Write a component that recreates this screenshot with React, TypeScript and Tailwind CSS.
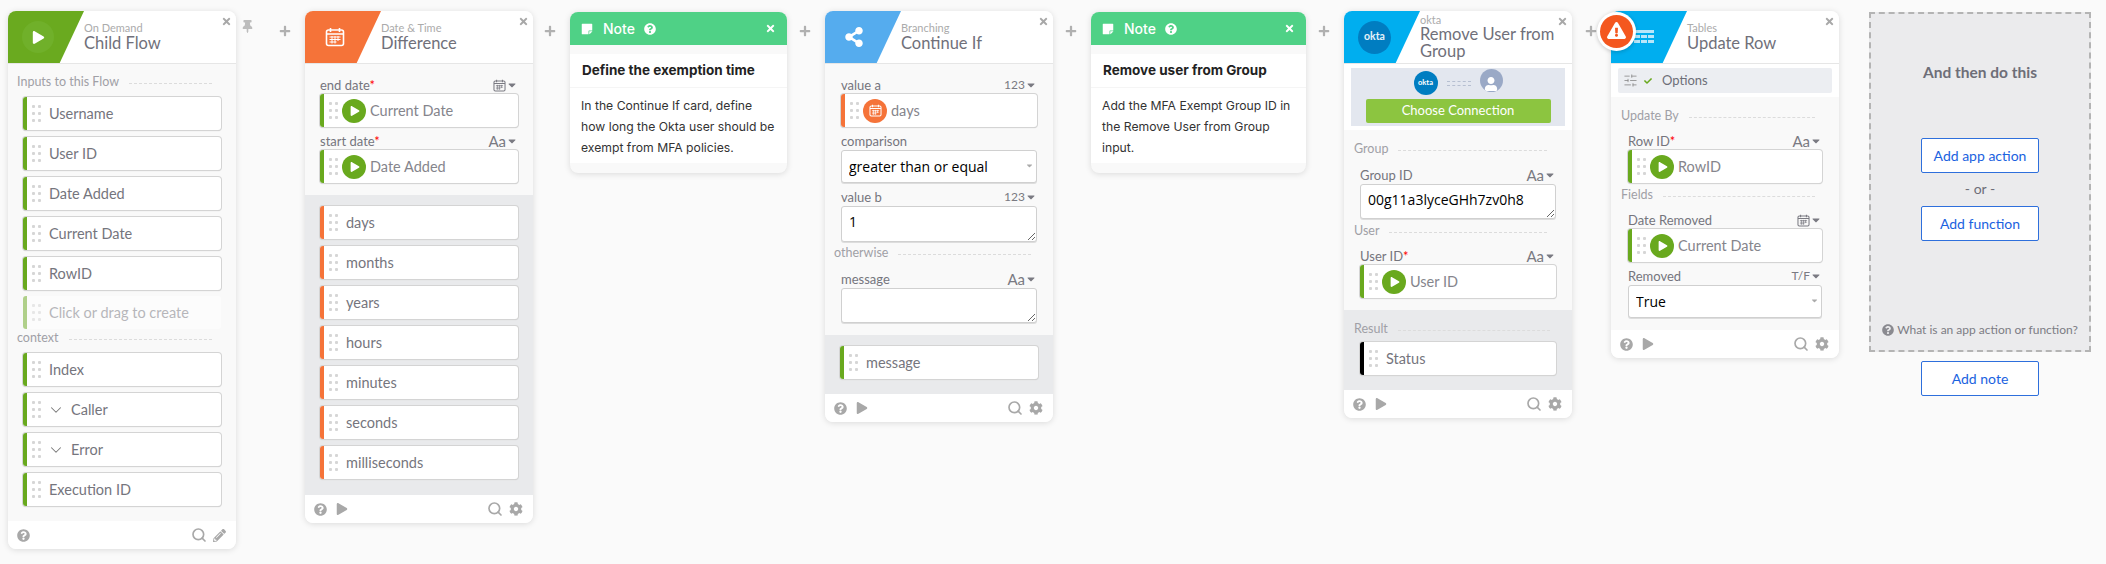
import type { ReactNode } from "react";
import { ChevronDown, Search, SlidersHorizontal } from "lucide-react";
import {
  FaCaretDown,
  FaCheck,
  FaCog,
  FaExclamationTriangle,
  FaPencilAlt,
  FaPlay,
  FaPlus,
  FaQuestionCircle,
  FaShareAlt,
  FaStickyNote,
  FaThumbtack,
  FaTimes,
  FaUser,
} from "react-icons/fa";

// accent colours of the pills
const GREEN = "bg-[#69a91e]";
const ORANGE = "bg-[#f57339]";

function DragDots() {
  return (
    <svg width="9" height="17" viewBox="0 0 9 17" className="shrink-0 fill-[#d6d6d6]">
      <rect x="0" y="0" width="3" height="3" rx="1" />
      <rect x="6" y="0" width="3" height="3" rx="1" />
      <rect x="0" y="7" width="3" height="3" rx="1" />
      <rect x="6" y="7" width="3" height="3" rx="1" />
      <rect x="0" y="14" width="3" height="3" rx="1" />
      <rect x="6" y="14" width="3" height="3" rx="1" />
    </svg>
  );
}

function CalendarGlyph({ size = 14, className = "" }: { size?: number; className?: string }) {
  return (
    <svg width={size} height={size} viewBox="0 0 20 20" className={className} fill="none" stroke="currentColor">
      <rect x="1.5" y="3" width="17" height="15.5" rx="2" strokeWidth="1.6" />
      <path d="M5.5 1v4M14.5 1v4M1.5 7h17" strokeWidth="1.6" />
      <path d="M4.5 10h11M4.5 12.5h11M4.5 15h7M7 9v7.5M10 9v7.5M13 9v5" strokeWidth="1" />
    </svg>
  );
}

function PlayBadge() {
  return (
    <span className="ml-[2px] flex h-[24px] w-[24px] shrink-0 items-center justify-center rounded-full bg-[#69a91e]">
      <FaPlay size={10} className="ml-[2px] text-white" />
    </span>
  );
}

function Pill({
  label,
  accent = GREEN,
  badge,
  faded,
  chevron,
}: {
  label: string;
  accent?: string;
  badge?: ReactNode;
  faded?: boolean;
  chevron?: boolean;
}) {
  return (
    <div
      className={
        "flex h-[33px] items-center overflow-hidden rounded-[3px] bg-white shadow-[0_0_0_1px_#d4d4d4,0_1px_1px_#c8c8c8] " +
        (faded ? "opacity-50 shadow-none" : "")
      }
    >
      <span className={"h-full w-[4px] shrink-0 " + accent} />
      <span className="ml-[5px] flex">
        <DragDots />
      </span>
      {chevron && <ChevronDown size={18} strokeWidth={1.4} className="ml-[6px] text-[#777]" />}
      {badge ? (
        <span className="ml-[2px] flex items-center gap-[4px]">
          {badge}
          <span className="text-[14.5px] text-[#85858c]">{label}</span>
        </span>
      ) : (
        <span className={"text-[14.5px] text-[#75757d] " + (chevron ? "ml-[6px]" : "ml-[8px]")}>{label}</span>
      )}
    </div>
  );
}

function TypeTag({ type }: { type: string }) {
  return (
    <span className="flex items-center text-[#7a7a82]">
      {type === "date" ? (
        <CalendarGlyph size={13} />
      ) : (
        <span className={type === "Aa" ? "text-[15px]" : "text-[12px]"}>{type}</span>
      )}
      <FaCaretDown size={12} className="-mr-[2px]" />
    </span>
  );
}

function FieldLabel({ name, required, type }: { name: string; required?: boolean; type?: string }) {
  return (
    <div className="mb-[1px] flex h-4 items-center justify-between pr-[2px] text-[13px] leading-4 text-[#75757d]">
      <span>
        {name}
        {required && <span className="text-[#f00]">*</span>}
      </span>
      {type && <TypeTag type={type} />}
    </div>
  );
}

function TextBox({ value, height }: { value: string; height: string }) {
  return (
    <textarea
      readOnly
      defaultValue={value}
      className={
        "block w-full resize overflow-hidden rounded-[3px] border border-[#d0d0d0] bg-white px-[7px] py-[5px] font-['Open_Sans',sans-serif] text-[14px] leading-[20px] text-black outline-none shadow-[0_1px_0_#ddd] " +
        height
      }
    />
  );
}

function SelectBox({ value }: { value: string }) {
  return (
    <div className="relative">
      <select
        defaultValue={value}
        className="block h-[33px] w-full appearance-none rounded-[3px] border border-[#d0d0d0] bg-white px-[7px] font-['Open_Sans',sans-serif] text-[14px] text-black outline-none shadow-[0_1px_0_#ddd]"
      >
        <option>{value}</option>
      </select>
      <FaCaretDown size={9} className="absolute right-[3px] top-[11px] text-[#aaa]" />
    </div>
  );
}

function Section({ label, className = "" }: { label: string; className?: string }) {
  return (
    <div className={"flex h-4 items-center gap-[10px] text-[12.5px] leading-4 text-[#a0a0a6] " + className}>
      <span>{label}</span>
      <span className="mt-[3px] flex-1 border-t border-dashed border-[#dcdcdc]" />
    </div>
  );
}

function Footer({ run = true, edit }: { run?: boolean; edit?: boolean }) {
  return (
    <div className="flex h-[28px] items-center justify-between rounded-b-lg bg-white pl-[9px] pr-[10px] text-[#a8a8a8]">
      <span className="flex items-center gap-[9px]">
        <FaQuestionCircle size={13} />
        {run && <FaPlay size={12} />}
      </span>
      <span className="flex items-center gap-[6px]">
        <Search size={16} strokeWidth={2.5} />
        {edit ? <FaPencilAlt size={13} /> : <FaCog size={14} />}
      </span>
    </div>
  );
}

function Card({
  category,
  title,
  color,
  icon,
  children,
  compactTitle,
}: {
  category: string;
  title: string;
  color: string;
  icon: ReactNode;
  children: ReactNode;
  compactTitle?: boolean;
}) {
  return (
    <div className="relative w-[228px] shrink-0 rounded-lg bg-[#f9f9f9] shadow-[0_1px_6px_rgba(0,0,0,0.13)]">
      <div className="relative flex h-[53px] rounded-t-lg border-b border-[#e6e6e6] bg-white">
        <div
          className={
            "flex h-[52px] w-[76px] shrink-0 items-center rounded-tl-lg pl-[14px] [clip-path:polygon(0_0,100%_0,68%_100%,0_100%)] " +
            color
          }
        >
          {icon}
        </div>
        <div className={compactTitle ? "pt-[3px]" : "pt-[11px]"}>
          <div className="text-[11px] leading-[12px] text-[#ababab]">{category}</div>
          <div className={"w-[136px] text-[16.5px] text-[#70707a] " + (compactTitle ? "leading-[17px]" : "leading-[18px]")}>
            {title}
          </div>
        </div>
        <FaTimes size={11} className="absolute right-[4px] top-[5px] text-[#a8a8a8]" />
      </div>
      {children}
    </div>
  );
}

function Gap({ width, pin }: { width: string; pin?: boolean }) {
  return (
    <div className={"flex shrink-0 justify-end pt-[14px] " + width}>
      {pin && <FaThumbtack size={13} className="-mt-[5px] mr-[25px] text-[#bdbdbd]" />}
      <FaPlus size={12} className="mr-[14px] text-[#b0b0b0]" />
    </div>
  );
}

function Note({ title, lines, width }: { title: string; lines: string[]; width: string }) {
  return (
    <div
      className={
        "relative mt-[1px] shrink-0 overflow-hidden rounded-lg bg-[#f9f9f9] font-[Inter,sans-serif] shadow-[0_1px_6px_rgba(0,0,0,0.13)] " +
        width
      }
    >
      <div className="flex h-[33px] items-center bg-[#4fd186] pl-[11px] text-white">
        <FaStickyNote size={12} />
        <span className="ml-[10px] text-[14px] font-medium">Note</span>
        <FaQuestionCircle size={12} className="ml-[9px]" />
        <FaTimes size={11} className="absolute right-[11px] top-[11px]" />
      </div>
      <div className="mt-[9px] bg-white pb-[5px]">
        <div className="flex h-[34px] items-center border-b border-[#f5f5f5] pl-[12px] text-[13.5px] font-bold text-[#222]">
          {title}
        </div>
        <div className="pl-[11px] pt-[7px] text-[12.2px] leading-[21px] text-[#333]">
          {lines.map((l) => (
            <div key={l}>{l}</div>
          ))}
        </div>
      </div>
      <div className="h-[10px]" />
    </div>
  );
}

const OUTPUTS = ["days", "months", "years", "hours", "minutes", "seconds", "milliseconds"];

export default function App() {
  return (
    <div className="flex h-[564px] items-start overflow-hidden bg-[#fafafa] pl-[8px] pt-[11px] font-[Lato,sans-serif]">
      {/* Flow trigger */}
      <Card
        category="On Demand"
        title="Child Flow"
        color="bg-[#6aaa1f]"
        icon={
          <span className="flex h-[32px] w-[32px] items-center justify-center rounded-full bg-[#70b02a]">
            <FaPlay size={13} className="ml-[1px] text-white" />
          </span>
        }
      >
        <div className="px-[15px] pb-[15px] pt-[10px]">
          <Section label="Inputs to this Flow" className="-ml-[6px] mr-[9px]" />
          <div className="mt-[7px] flex flex-col gap-[7px]">
            <Pill label="Username" />
            <Pill label="User ID" />
            <Pill label="Date Added" />
            <Pill label="Current Date" />
            <Pill label="RowID" />
          </div>
          <div className="mt-[6px]">
            <Pill label="Click or drag to create" faded />
          </div>
          <Section label="context" className="-ml-[6px] mr-[9px] mt-[1px]" />
          <div className="mt-[7px] flex flex-col gap-[7px]">
            <Pill label="Index" />
            <Pill label="Caller" chevron />
            <Pill label="Error" chevron />
            <Pill label="Execution ID" />
          </div>
        </div>
        <Footer run={false} edit />
      </Card>

      <Gap width="w-[69px]" pin />

      {/* Date difference */}
      <Card
        category="Date & Time"
        title="Difference"
        color="bg-[#f57339]"
        icon={<CalendarGlyph size={20} className="ml-[6px] text-white" />}
      >
        <div className="px-[15px] pb-[12px] pt-[13px]">
          <FieldLabel name="end date" required type="date" />
          <Pill label="Current Date" badge={<PlayBadge />} />
          <div className="mt-[6px]">
            <FieldLabel name="start date" required type="Aa" />
            <Pill label="Date Added" badge={<PlayBadge />} />
          </div>
        </div>
        <div className="flex flex-col gap-[7px] bg-[#e9eaec] px-[15px] pb-[16px] pt-[11px]">
          {OUTPUTS.map((o) => (
            <Pill key={o} label={o} accent={ORANGE} />
          ))}
        </div>
        <Footer />
      </Card>

      <Gap width="w-[37px]" />

      <Note
        width="w-[217px]"
        title="Define the exemption time"
        lines={["In the Continue If card, define", "how long the Okta user should be", "exempt from MFA policies."]}
      />

      <Gap width="w-[38px]" />

      {/* Continue If */}
      <Card
        category="Branching"
        title="Continue If"
        color="bg-[#55acee]"
        icon={<FaShareAlt size={20} className="ml-[5px] text-white" />}
      >
        <div className="pb-[12px] pt-[13px]">
          <div className="px-[16px]">
            <FieldLabel name="value a" type="123" />
            <Pill
              label="days"
              accent={ORANGE}
              badge={
                <span className="ml-[2px] flex h-[24px] w-[24px] items-center justify-center rounded-full bg-[#f57339] text-white">
                  <CalendarGlyph size={13} />
                </span>
              }
            />
            <div className="mt-[6px]">
              <FieldLabel name="comparison" />
              <SelectBox value="greater than or equal" />
            </div>
            <div className="mt-[6px]">
              <FieldLabel name="value b" type="123" />
              <TextBox value="1" height="h-[36px]" />
            </div>
          </div>
          <Section label="otherwise" className="ml-[9px] mr-[22px] mt-[3px]" />
          <div className="mt-[10px] px-[16px]">
            <FieldLabel name="message" type="Aa" />
            <TextBox value="" height="h-[35px]" />
          </div>
        </div>
        <div className="bg-[#e9eaec] px-[15px] pb-[15px] pt-[11px]">
          <Pill label="message" />
        </div>
        <Footer />
      </Card>

      <Gap width="w-[38px]" />

      <Note
        width="w-[215px]"
        title="Remove user from Group"
        lines={["Add the MFA Exempt Group ID in", "the Remove User from Group", "input."]}
      />

      <Gap width="w-[38px]" />

      {/* Okta action */}
      <Card
        category="okta"
        title="Remove User from Group"
        color="bg-[#00aeef]"
        compactTitle
        icon={
          <span className="flex h-[33px] w-[33px] items-center justify-center rounded-full bg-[#007dc1] text-[10.5px] font-bold text-white/90">
            okta
          </span>
        }
      >
        <div className="bg-white px-[7px] pb-[4px] pt-[4px]">
          <div className="flex h-[58px] flex-col items-center bg-[#e3e7ef] pt-[1px]">
            <div className="flex h-[28px] items-center">
              <span className="flex h-[24px] w-[24px] items-center justify-center rounded-full bg-[#007dc1] text-[7.5px] font-bold text-white">
                okta
              </span>
              <span className="mx-[9px] flex w-[24px] flex-col gap-[3px]">
                <span className="border-t border-dashed border-[#b6bfd1]" />
                <span className="border-t border-dashed border-[#b6bfd1]" />
              </span>
              <span className="-mt-[5px] flex h-[23px] w-[23px] items-end justify-center overflow-hidden rounded-full bg-[#9aa9c6] pb-[1px] text-white">
                <FaUser size={14} />
              </span>
            </div>
            <div className="mt-[2px] flex h-[24px] w-[185px] items-center justify-center rounded-[2px] bg-[#8cc540] text-[13px] text-white">
              Choose Connection
            </div>
          </div>
        </div>
        <div className="pb-[12px] pt-[11px]">
          <Section label="Group" className="ml-[10px] mr-[25px]" />
          <div className="mt-[10px] px-[16px]">
            <FieldLabel name="Group ID" type="Aa" />
            <TextBox value="00g11a3lyceGHh7zv0h8" height="h-[35px]" />
          </div>
          <Section label="User" className="ml-[10px] mr-[25px] mt-[4px]" />
          <div className="mt-[9px] px-[16px]">
            <FieldLabel name="User ID" required type="Aa" />
            <Pill label="User ID" badge={<PlayBadge />} />
          </div>
        </div>
        <div className="bg-[#e9eaec] pb-[15px] pt-[11px]">
          <Section label="Result" className="ml-[10px] mr-[22px]" />
          <div className="mt-[5px] px-[16px]">
            <Pill label="Status" accent="bg-black" />
          </div>
        </div>
        <Footer />
      </Card>

      <Gap width="w-[39px]" />

      {/* Tables action */}
      <Card
        category="Tables"
        title="Update Row"
        color="bg-[#00aeef]"
        icon={
          <svg width="20" height="14" viewBox="0 0 20 14" className="ml-[9px] fill-[#b7e6fa]">
            <rect x="0" y="0" width="20" height="3" />
            <rect x="0" y="5" width="6" height="3" />
            <rect x="7" y="5" width="6" height="3" />
            <rect x="14" y="5" width="6" height="3" />
            <rect x="0" y="10" width="6" height="3" />
            <rect x="7" y="10" width="6" height="3" />
            <rect x="14" y="10" width="6" height="3" />
          </svg>
        }
      >
        <span className="absolute -left-[11px] top-[4px] flex h-[33px] w-[33px] items-center justify-center rounded-full bg-[#f4571f] shadow-[0_0_0_3px_#fff,0_1px_4px_3px_rgba(0,0,0,0.2)]">
          <FaExclamationTriangle size={19} className="-mt-[2px] text-white" />
        </span>
        <div className="bg-white px-[7px] pb-[4px] pt-[4px]">
          <div className="flex h-[25px] items-center rounded-[2px] bg-[#eceef2] pl-[5px] text-[13px] text-[#6e6e78]">
            <SlidersHorizontal size={15} strokeWidth={1.3} className="text-[#888]" />
            <FaCheck size={8} className="ml-[6px] text-[#69a91e]" />
            <span className="ml-[10px]">Options</span>
          </div>
        </div>
        <div className="pb-[12px] pt-[11px]">
          <Section label="Update By" className="ml-[10px] mr-[24px]" />
          <div className="mt-[9px] px-[17px]">
            <FieldLabel name="Row ID" required type="Aa" />
            <Pill label="RowID" badge={<PlayBadge />} />
          </div>
          <Section label="Fields" className="ml-[10px] mr-[24px] mt-[4px]" />
          <div className="mt-[9px] px-[17px]">
            <FieldLabel name="Date Removed" type="date" />
            <Pill label="Current Date" badge={<PlayBadge />} />
            <div className="mt-[6px]">
              <FieldLabel name="Removed" type="T/F" />
              <SelectBox value="True" />
            </div>
          </div>
        </div>
        <Footer />
      </Card>

      {/* Next step */}
      <div className="ml-[30px] mt-[1px] flex w-[222px] shrink-0 flex-col items-center">
        <div className="flex h-[340px] w-full flex-col items-center border-2 border-dashed border-[#b4b4b4] bg-[#ebebed] pt-[47px]">
          <div className="text-[15.5px] font-bold text-[#6e6e78]">And then do this</div>
          <button className="mt-[54px] h-[35px] w-[118px] rounded-[2px] border border-[#2e6fdc] bg-white text-[14px] text-[#1a62e0]">
            Add app action
          </button>
          <div className="mt-[7px] text-[14px] leading-[18px] text-[#6e6e78]">- or -</div>
          <button className="mt-[8px] h-[35px] w-[118px] rounded-[2px] border border-[#2e6fdc] bg-white text-[14px] text-[#1a62e0]">
            Add function
          </button>
          <div className="mt-[80px] flex items-center gap-[3px] text-[12px] text-[#7c7c84]">
            <FaQuestionCircle size={12} className="text-[#8a8a90]" />
            <span>What is an app action or function?</span>
          </div>
        </div>
        <button className="mt-[9px] h-[35px] w-[118px] rounded-[2px] border border-[#2e6fdc] bg-white text-[14px] text-[#1a62e0]">
          Add note
        </button>
      </div>
    </div>
  );
}
